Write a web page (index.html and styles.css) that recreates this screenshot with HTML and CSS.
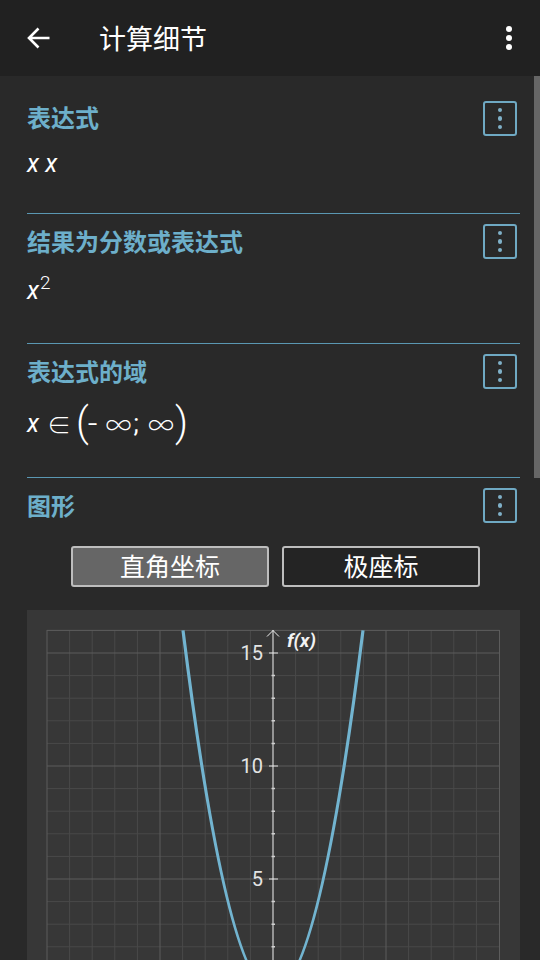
FILE: index.html
```html
<!DOCTYPE html>
<html lang="zh">
<head>
    <meta charset="UTF-8">
    <meta name="viewport" content="width=device-width, initial-scale=1.0">
    <title>计算细节</title>
    <link rel="stylesheet" href="styles.css">
</head>
<body>
    <div class="screen">
        <header class="toolbar">
            <svg class="back-icon" width="24" height="24" viewBox="0 0 24 24">
                <path d="M22.500 12H2.500M11.500 2.500 2 12l9.500 9.500" fill="none" stroke="#fff" stroke-width="2.600"/>
            </svg>
            <div class="toolbar-title">计算细节</div>
            <svg class="more-icon" width="8" height="24" viewBox="0 0 8 24">
                <circle cx="4" cy="3" r="3" fill="#fff"/>
                <circle cx="4" cy="12" r="3" fill="#fff"/>
                <circle cx="4" cy="21" r="3" fill="#fff"/>
            </svg>
        </header>

        <main class="content">
            <section class="block first">
                <div class="block-head">
                    <h2>表达式</h2>
                    <div class="menu-btn"><i></i><i></i><i></i></div>
                </div>
                <div class="math math-plain"><em>x x</em></div>
            </section>

            <section class="block">
                <div class="block-head">
                    <h2>结果为分数或表达式</h2>
                    <div class="menu-btn"><i></i><i></i><i></i></div>
                </div>
                <div class="math math-power"><em>x</em><sup>2</sup></div>
            </section>

            <section class="block">
                <div class="block-head">
                    <h2>表达式的域</h2>
                    <div class="menu-btn"><i></i><i></i><i></i></div>
                </div>
                <div class="math math-domain"><em>x</em><span class="in">∈</span><span class="paren">(</span><span class="minus">-</span><span class="inf">∞</span><span class="semi">;</span><span class="inf">∞</span><span class="paren">)</span></div>
            </section>

            <section class="block last">
                <div class="block-head">
                    <h2>图形</h2>
                    <div class="menu-btn"><i></i><i></i><i></i></div>
                </div>
                <div class="tabs">
                    <div class="tab active">直角坐标</div>
                    <div class="tab">极座标</div>
                </div>
                <div class="plot">
                    <svg class="plot-svg" width="493" height="350" viewBox="27 610 493 350">
                        <path class="grid-minor" d="M69.600 630V960M92.200 630V960M114.800 630V960M137.400 630V960M182.600 630V960M205.200 630V960M227.800 630V960M250.400 630V960M295.600 630V960M318.200 630V960M340.800 630V960M363.400 630V960M408.600 630V960M431.200 630V960M453.800 630V960M476.400 630V960M47 675.600H499.500M47 698.200H499.500M47 720.800H499.500M47 743.400H499.500M47 788.600H499.500M47 811.200H499.500M47 833.800H499.500M47 856.400H499.500M47 901.600H499.500M47 924.200H499.500M47 946.800H499.500"/>
                        <path class="grid-major" d="M47 630V960M160 630V960M386 630V960M499.500 630V960M47 630.400H499.500M47 653H499.500M47 766H499.500M47 879H499.500"/>
                        <path class="curve" d="M183 630.400Q273 1353.600 363 630.400"/>
                        <path class="axis" d="M273 630V960M267 636.500 273 630.500 279 636.500"/>
                        <path class="tick" d="M269 653H278M269 766H278M269 879H278"/>
                        <path class="tick-minor" d="M271.500 675.600H275M271.500 698.200H275M271.500 720.800H275M271.500 743.400H275M271.500 788.600H275M271.500 811.200H275M271.500 833.800H275M271.500 856.400H275M271.500 901.600H275M271.500 924.200H275M271.500 946.800H275"/>
                        <text class="num" x="263" y="660">15</text>
                        <text class="num" x="263" y="773">10</text>
                        <text class="num" x="263" y="886">5</text>
                        <text class="fx" x="287" y="647">f(x)</text>
                    </svg>
                </div>
            </section>
        </main>

        <div class="scrollbar"></div>
    </div>
</body>
</html>
```

FILE: styles.css
```css
/* Basic styling */
html, body {
    margin: 0;
    padding: 0;
    background-color: #292929;
}

body {
    font-family: "Noto Sans CJK SC", Roboto, sans-serif;
    color: #fff;
}

.screen {
    position: relative;
    width: 540px;
    height: 960px;
    overflow: hidden;
}

/* Toolbar */
.toolbar {
    display: flex;
    align-items: center;
    height: 76px;
    background-color: #212121;
}

.back-icon {
    margin-left: 27px;
    margin-bottom: 1px;
}

.toolbar-title {
    flex: 1;
    margin-left: 48px;
    font-size: 27px;
    line-height: 76px;
}

.more-icon {
    margin-right: 27px;
    margin-bottom: 1px;
}

/* Sections */
.content {
    padding: 0 20px 0 27px;
}

.block {
    padding: 10px 0 30px;
    border-bottom: 1px solid #5a97b2;
}

.block.first {
    padding-top: 25px;
    padding-bottom: 31px;
}

.block.first h2 {
    margin-bottom: 5px;
}

.block.last {
    padding-bottom: 0;
    border-bottom: none;
}

.block-head {
    display: flex;
    align-items: center;
    justify-content: space-between;
    height: 35px;
    padding-right: 3px;
}

.block-head h2 {
    margin: 0 0 3px;
    font-size: 24px;
    font-weight: 700;
    color: #6dafca;
}

.menu-btn {
    display: flex;
    flex-direction: column;
    align-items: center;
    justify-content: center;
    gap: 4px;
    width: 34px;
    height: 35px;
    box-sizing: border-box;
    border: 2px solid #6fa9c3;
    border-radius: 3px;
}

.menu-btn i {
    width: 4.500px;
    height: 4.500px;
    border-radius: 50%;
    background-color: #7fb0c8;
}

/* Formulas */
.math {
    margin-top: 10px;
    font-family: Roboto, sans-serif;
    font-size: 25px;
}

.math em {
    font-style: italic;
}

.math-plain {
    height: 36px;
    line-height: 36px;
}

.math-power {
    height: 44px;
    line-height: 44px;
}

.math-power sup {
    font-size: 19px;
    font-weight: 300;
    line-height: 0;
    vertical-align: 10px;
    margin-left: 1px;
}

.math-domain {
    display: flex;
    align-items: center;
    height: 48px;
}

.in {
    margin-left: 8px;
    font-family: "Noto Sans CJK SC", sans-serif;
    font-weight: 300;
    font-size: 24px;
}

.paren {
    font-size: 40px;
    font-weight: 300;
    line-height: 48px;
    margin-left: 5px;
}

.paren:last-child {
    margin-left: 1px;
}

.minus {
    margin-left: -1px;
    margin-right: 6px;
    font-size: 34px;
    font-weight: 300;
    line-height: 48px;
}

.inf {
    margin-left: 2px;
    font-family: "Noto Sans CJK SC", sans-serif;
    font-weight: 300;
    font-size: 26px;
}

.semi {
    margin-left: 2px;
    margin-right: 7px;
}

/* Graph tabs */
.tabs {
    display: flex;
    justify-content: center;
    gap: 13px;
    margin-top: 23px;
    padding-left: 4px;
}

.tab {
    width: 198px;
    height: 41px;
    box-sizing: border-box;
    border: 2px solid #bdbdbd;
    border-radius: 3px;
    background-color: #242424;
    font-size: 25px;
    line-height: 35px;
    text-align: center;
}

.tab.active {
    background-color: #666;
}

/* Graph */
.plot {
    margin-top: 23px;
    background-color: #373737;
    height: 350px;
}

.plot-svg {
    display: block;
}

.grid-minor {
    fill: none;
    stroke: #494949;
    stroke-width: 1;
}

.grid-major {
    fill: none;
    stroke: #5c5c5c;
    stroke-width: 1;
}

.curve {
    fill: none;
    stroke: #72b4d0;
    stroke-width: 3.200;
}

.axis {
    fill: none;
    stroke: #f2f2f2;
    stroke-width: 1;
}

.tick {
    fill: none;
    stroke: #e8e8e8;
    stroke-width: 1;
}

.tick-minor {
    fill: none;
    stroke: #d0d0d0;
    stroke-width: 1.500;
}

.num {
    font-family: Roboto, sans-serif;
    font-size: 20px;
    fill: #e4e4e4;
    text-anchor: end;
}

.fx {
    font-family: Roboto, sans-serif;
    font-size: 19px;
    font-weight: 700;
    font-style: italic;
    fill: #f2f2f2;
}

/* Scrollbar lies over the page edge */
.scrollbar {
    position: absolute;
    top: 76px;
    right: 0;
    width: 6px;
    height: 402px;
    background-color: #666;
}
```
